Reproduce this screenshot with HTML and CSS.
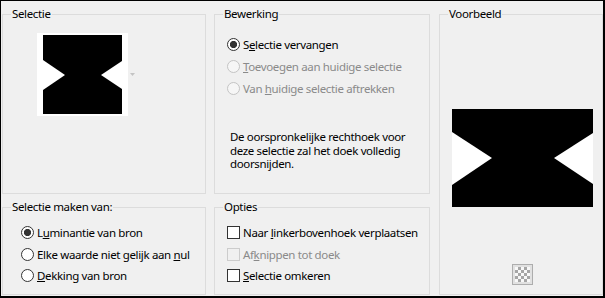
FILE: index.html
```html
<!DOCTYPE html>
<html lang="nl">
<head>
<meta charset="utf-8">
<title>Selectie</title>
<link rel="stylesheet" href="styles.css">
</head>
<body>
<div class="window">
  <fieldset class="group sel">
    <legend>Selectie</legend>
    <div class="thumb-row">
      <svg class="thumb" width="91" height="83" viewBox="0 0 91 83">
        <rect x="0" y="0" width="91" height="83" fill="#fff"/>
        <rect x="6" y="2" width="79" height="79" fill="#000"/>
        <polygon points="6,27 28,42 6,57" fill="#fff"/>
        <polygon points="85,28 64,42 85,56" fill="#fff"/>
      </svg>
      <svg class="drop" width="5" height="3" viewBox="0 0 5 3">
        <polygon points="0,0 5,0 2.5,3" fill="#c4c4c4"/>
      </svg>
    </div>
  </fieldset>

  <fieldset class="group edit">
    <legend>Bewerking</legend>
    <div class="options">
      <div class="opt"><span class="radio checked"></span><span class="lbl">S<u>e</u>lectie vervangen</span></div>
      <div class="opt disabled"><span class="radio"></span><span class="lbl"><u>T</u>oevoegen aan huidige selectie</span></div>
      <div class="opt disabled"><span class="radio"></span><span class="lbl">Van <u>h</u>uidige selectie aftrekken</span></div>
    </div>
    <p class="note">De oorspronkelijke rechthoek voor<br>deze selectie zal het doek volledig<br>doorsnijden.</p>
  </fieldset>

  <fieldset class="group preview">
    <legend>Voorbeeld</legend>
    <div class="preview-body">
      <svg class="big" width="141" height="98" viewBox="0 0 141 98">
        <rect x="0" y="0" width="141" height="98" fill="#000"/>
        <polygon points="0,23 40,49 0,76" fill="#fff"/>
        <polygon points="141,24 102,49 141,75" fill="#fff"/>
      </svg>
      <div class="checker-btn"><span class="checker"></span></div>
    </div>
  </fieldset>

  <fieldset class="group source">
    <legend>Selectie maken van:</legend>
    <div class="options small">
      <div class="opt"><span class="radio checked"></span><span class="lbl">L<u>u</u>minantie van bron</span></div>
      <div class="opt"><span class="radio"></span><span class="lbl">Elke waarde niet gelijk aan <u>n</u>ul</span></div>
      <div class="opt"><span class="radio"></span><span class="lbl"><u>D</u>ekking van bron</span></div>
    </div>
  </fieldset>

  <fieldset class="group opts">
    <legend>Opties</legend>
    <div class="options small">
      <div class="opt"><span class="check"></span><span class="lbl">Naar <u>l</u>inkerbovenhoek verplaatsen</span></div>
      <div class="opt disabled"><span class="check"></span><span class="lbl">Af<u>k</u>nippen tot doek</span></div>
      <div class="opt"><span class="check"></span><span class="lbl"><u>S</u>electie omkeren</span></div>
    </div>
  </fieldset>
</div>
</body>
</html>
```

FILE: styles.css
```css
* { box-sizing: border-box; }

html, body {
  margin: 0;
  padding: 0;
  background: #f0f0f0;
}

body {
  font-family: "Noto Sans", "Open Sans", sans-serif;
  font-size: 11.5px;
  letter-spacing: -0.35px;
  color: #000;
}

.window {
  width: 605px;
  height: 298px;
  background: #f0f0f0;
  border-style: solid;
  border-color: #000;
  border-width: 1px 2px 2px 1px;
  padding: 5px 0 1px 1px;
  display: grid;
  grid-template-columns: 204px 216px 165px;
  grid-template-rows: 188px 96px;
  column-gap: 8px;
  row-gap: 5px;
}

.group {
  margin: 0;
  padding: 0;
  min-width: 0;
  border: 1px solid #dcdcdc;
}

.group legend {
  margin-left: 8px;
  padding: 0 1px;
  line-height: 16px;
  height: 16px;
}

.sel { grid-column: 1; grid-row: 1; }
.edit { grid-column: 2; grid-row: 1; }
.preview { grid-column: 3; grid-row: 1 / span 2; margin-left: 1px; }
.source { grid-column: 1; grid-row: 2; }
.opts { grid-column: 2; grid-row: 2; }

.thumb-row {
  display: flex;
  align-items: center;
  gap: 2px;
  padding: 11px 0 0 34px;
}

.thumb, .drop, .big { display: block; }

.options {
  display: flex;
  flex-direction: column;
  padding: 11px 0 0 12px;
}

.opt {
  display: flex;
  align-items: center;
  height: 22px;
  white-space: nowrap;
}

.options.small { padding-top: 7px; }
.options.small .opt { height: 21.5px; }
.source .options { padding-left: 18px; }

.lbl { margin-left: 3px; }
.lbl u { text-underline-offset: 1px; }

.radio {
  width: 13px;
  height: 13px;
  border-radius: 50%;
  border: 1px solid #333;
  background: #fff;
  flex: none;
}

.radio.checked {
  background: radial-gradient(circle, #333 0 3.3px, #fff 3.9px);
}

.check {
  width: 13px;
  height: 13px;
  border: 1px solid #333;
  background: #fff;
  flex: none;
}

.opt.disabled { color: #8a8a8a; }
.opt.disabled .radio { border-color: #c4c4c4; background: #f6f6f6; }
.opt.disabled .check { border-color: #cccccc; background: #f0f0f0; }

.note {
  margin: 31px 0 0 15px;
  line-height: 13.5px;
}

.preview-body {
  display: flex;
  flex-direction: column;
  align-items: center;
  padding: 87px 0 0 3px;
}

.checker-btn {
  margin-top: 57px;
  width: 21px;
  height: 21px;
  border: 1px solid #adadad;
  background: #e1e1e1;
  display: flex;
  align-items: center;
  justify-content: center;
}

.checker {
  width: 15px;
  height: 15px;
  background-color: #f8f8f8;
  background-image:
    linear-gradient(45deg, #a6a6a6 25%, transparent 25%, transparent 75%, #a6a6a6 75%),
    linear-gradient(45deg, #a6a6a6 25%, transparent 25%, transparent 75%, #a6a6a6 75%);
  background-size: 6px 6px;
  background-position: 0 0, 3px 3px;
}
```
